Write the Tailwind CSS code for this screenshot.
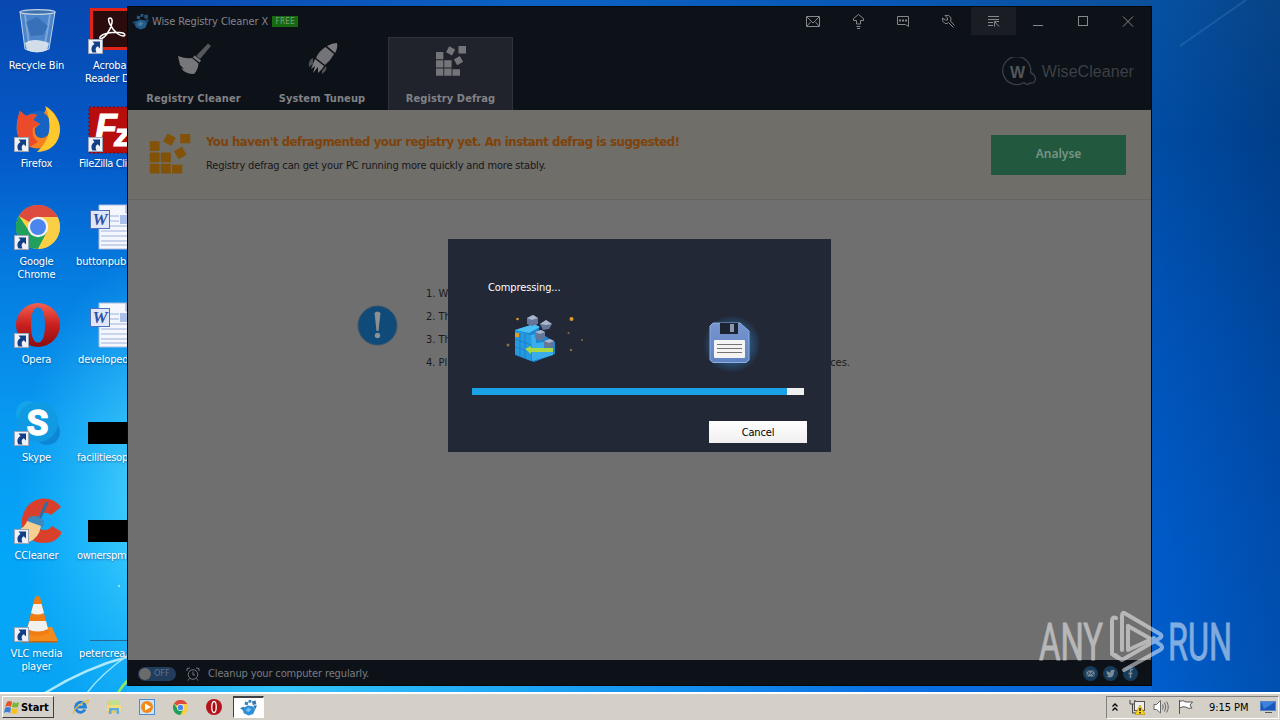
<!DOCTYPE html>
<html lang="en">
<head>
  <meta charset="UTF-8" />
  <meta name="viewport" content="width=device-width, initial-scale=1" />
  <title>Wise Registry Cleaner X</title>
  <script src="https://cdn.jsdelivr.net/npm/@tailwindcss/browser@4"></script>
  <style>
    body { font-family: 'DejaVu Sans Condensed', 'DejaVu Sans', sans-serif; font-size: 11px; line-height: 13px; }
    .label { text-shadow: 0 1px 2px rgba(0, 30, 80, .5); letter-spacing: -.15px; }
  </style>
</head>
<body class="w-[1280px] h-[720px] overflow-hidden">
  <!-- Shared shapes -->
  <svg width="0" height="0" class="absolute">
    <defs>
      <symbol id="shortcut" viewBox="0 0 15 15">
        <rect x=".5" y=".5" width="14" height="14" fill="#eef2f8" stroke="#9aa6b8" />
        <path d="M4.500 13.500C2.500 10 3.500 6.500 6.500 5L4.500 2.500H12V9.500L9.800 7.300C7.500 8.500 7 10.500 8.500 13.500Z" fill="#123f86" />
      </symbol>
      <symbol id="chrome" viewBox="0 0 44 44">
        <circle cx="22" cy="22" r="22" fill="#fbcf45" />
        <path d="M22 22L2.900 11A22 22 0 0 1 41.100 11L41 12H22Z" fill="#dd4b3e" />
        <path d="M2.900 11A22 22 0 0 0 22 44L31 27L22 22L13 26Z" fill="#1fa15d" />
        <path d="M22 12H41.500A22 22 0 0 1 22 44L31 27Z" fill="#fbcf45" />
        <circle cx="22" cy="22" r="10.200" fill="#f3f3f3" />
        <circle cx="22" cy="22" r="8" fill="#4a86ee" />
      </symbol>
      <symbol id="word" viewBox="0 0 48 48">
        <path d="M14 1H48V45H14Z" fill="#f4f7fd" stroke="#a9bbe0" />
        <path d="M25 12H34M25 17H34M16 22H48M16 27H48M16 32H48M16 37H48M16 41H48" stroke="#9db2dc" />
        <path d="M35 11H48V20H35Z" fill="#a8c0ea" />
        <path d="M41 1V9H48" fill="#dce5f6" stroke="#8b9cc0" />
        <rect x="5.500" y="6.500" width="19" height="18" fill="#dfe8fa" stroke="#4f70bd" />
        <text x="15" y="21" text-anchor="middle" font-family="Liberation Serif" font-style="italic" font-weight="bold" font-size="17" fill="#2b51a8">W</text>
      </symbol>
      <linearGradient id="operaRed" x1="0" y1="0" x2="0" y2="1">
        <stop offset="0" stop-color="#f4614f" /><stop offset=".5" stop-color="#c91f1f" /><stop offset="1" stop-color="#8d0d10" />
      </linearGradient>
      <symbol id="opera" viewBox="0 0 44 44">
        <path fill-rule="evenodd" d="M22 0A22 22 0 1 0 22 44A22 22 0 1 0 22 0ZM22 4.500C27 4.500 29 12 29 22S27 39.500 22 39.500S15 32 15 22S17 4.500 22 4.500Z" fill="url(#operaRed)" />
      </symbol>
      <symbol id="wise" viewBox="0 0 18 18">
        <path d="M4 9L9 7L14 8L16 11L14 16L9 17.500L4 15L3 12Z" fill="#2f8fd6" />
        <path d="M0 10L4 8L4 12Z M14 7L18 7L16 11Z" fill="#2273b5" />
        <rect x="5" y="3" width="3.500" height="3.500" fill="#3f86bd" transform="rotate(15 7 5)" />
        <rect x="9" y="1" width="3" height="3" fill="#3f86bd" />
        <rect x="13" y="2" width="4" height="4" fill="#3c79ac" transform="rotate(-12 15 4)" />
        <path d="M6 12L9 9L12 11L9 14Z" fill="#75c2f2" />
      </symbol>
      <symbol id="blocks" viewBox="0 0 40 40">
        <path d="M0 8H9.800V17.500H0ZM0 19H9.800V28.500H0ZM11 19H20.800V28.500H11ZM0 30H9.800V39.500H0ZM11 30H20.800V39.500H11ZM22 31H32V39.500H22Z" />
        <rect x="30" y="0" width="10" height="10" />
        <rect x="15" y="2" width="9" height="9" transform="rotate(28 19.500 6.500)" />
        <rect x="25.500" y="15" width="9" height="9" transform="rotate(-30 30 19.500)" />
      </symbol>
    </defs>
  </svg>

  <div class="relative flex h-full flex-col">
    <!-- Wallpaper -->
    <svg class="absolute inset-0" width="1280" height="692" viewBox="0 0 1280 692">
      <defs>
        <linearGradient id="sky" x1="0" y1="0" x2="0" y2="1">
          <stop offset="0" stop-color="#0848b0" /><stop offset=".22" stop-color="#045ac8" /><stop offset=".4" stop-color="#047ce0" />
          <stop offset=".6" stop-color="#0898f0" /><stop offset=".8" stop-color="#04a6f8" /><stop offset="1" stop-color="#08a4f4" />
        </linearGradient>
        <linearGradient id="top" x1="0" y1="0" x2="1" y2="0">
          <stop offset="0" stop-color="#0848b0" /><stop offset=".4" stop-color="#0c62c4" /><stop offset=".75" stop-color="#0757b4" /><stop offset="1" stop-color="#0b4f98" />
        </linearGradient>
        <linearGradient id="right" x1="0" y1="0" x2="0" y2="1">
          <stop offset="0" stop-color="#0a4a8c" /><stop offset=".2" stop-color="#00428f" /><stop offset=".5" stop-color="#004eae" />
          <stop offset=".75" stop-color="#0056c0" /><stop offset="1" stop-color="#005cc8" />
        </linearGradient>
        <linearGradient id="rightShade" x1="0" y1="0" x2="1" y2="0">
          <stop offset="0" stop-color="#0064d8" stop-opacity=".3" /><stop offset="1" stop-color="#003478" stop-opacity=".3" />
        </linearGradient>
        <radialGradient id="glow"><stop offset="0" stop-color="#5fe4ff" stop-opacity=".9" /><stop offset="1" stop-color="#35c4ff" stop-opacity="0" /></radialGradient>
        <linearGradient id="low" x1="0" y1="0" x2="1" y2="0">
          <stop offset="0" stop-color="#18aef4" /><stop offset=".15" stop-color="#33c4fb" /><stop offset=".4" stop-color="#1ca4f4" /><stop offset=".75" stop-color="#0a70e2" /><stop offset="1" stop-color="#0a64d4" />
        </linearGradient>
      </defs>
      <rect width="1152" height="692" fill="url(#sky)" />
      <rect x="127" width="1025" height="8" fill="url(#top)" />
      <ellipse cx="165" cy="500" rx="150" ry="250" fill="url(#glow)" />
      <rect x="1151" width="129" height="692" fill="url(#right)" />
      <rect x="1151" width="129" height="692" fill="url(#rightShade)" />
      <path d="M1180 46L1246 0" stroke="#4b86c4" stroke-width="2" opacity=".3" />
      <rect x="127" y="685" width="1025" height="7" fill="url(#low)" />
      <path d="M45 693Q85 668 130 656" stroke="#c9f5ff" stroke-width="2.500" fill="none" opacity=".85" />
      <path d="M87 693Q100 675 128 655" stroke="#c9f5ff" stroke-width="1.500" fill="none" opacity=".8" />
      <path d="M118 693Q122 686 128 680" stroke="#90e860" stroke-width="2.500" fill="none" />
      <circle cx="119" cy="586" r="1" fill="#b7f2ff" />
    </svg>

    <!-- Desktop icons -->
    <div class="relative grid h-[692px] content-start grid-cols-[73px_73px] auto-rows-[98px] pt-2 text-center text-white">
      <div class="flex flex-col items-center gap-[3px]">
        <svg width="48" height="48" viewBox="0 0 48 48">
          <path d="M7 4L12 41Q24 47 36 41L42 4Z" fill="#5f93cf" fill-opacity=".8" stroke="#b9d3ec" />
          <path d="M12 7L16 36M37 7L32 36" stroke="#d6e8f8" stroke-width="2" opacity=".35" />
          <path d="M13 14L24 9L35 18L30 27L18 28Z" fill="#2d64ab" opacity=".6" />
          <path d="M12 35Q20 29 36 35L34 42Q24 46 14 42Z" fill="#e9edf0" opacity=".85" />
          <ellipse cx="24.500" cy="4" rx="17.500" ry="2.300" fill="#3e71ae" stroke="#c3d3e4" stroke-width="1.300" />
        </svg>
        <p class="label">Recycle Bin</p>
      </div>
      <div class="flex flex-col items-start gap-[3px] pl-3">
        <svg width="48" height="48" viewBox="0 0 48 48">
          <rect x="5" y="0" width="46" height="42" fill="#e2231a" /><rect x="8" y="3" width="43" height="36" fill="#2a0c0c" />
          <path d="M25 10C29 10 27 19 22 26C18 31 14 32 15 29C18 25 30 23 38 25C42 27 39 30 33 26C26 21 21 10 25 10Z" fill="none" stroke="#fff" stroke-width="1.500" />
          <use href="#shortcut" x="3" y="31" width="15" height="15" />
        </svg>
        <p class="label w-[48px] text-left whitespace-nowrap"><span class="pl-2">Acroba</span><br />Reader D</p>
      </div>

      <div class="flex flex-col items-center gap-[3px]">
        <svg width="48" height="48" viewBox="0 0 48 48">
          <circle cx="26" cy="22" r="17" fill="#1763c4" />
          <path d="M7 5L13 10Q19 7 24 9L20 14L27 18L22 22C20 31 29 36 36 28C41 21 38 12 31 7L34 1C42 6 47 15 47 24A22 22 0 0 1 4 26C3 18 5 11 7 5Z" fill="#f58220" />
          <path d="M7 5L13 10Q19 7 24 9L20 14L27 18L20 22Q18 31 25 36L15 42Q3 34 4 23Q4 11 7 5Z" fill="#ec4a2b" />
          <path d="M32 0C43 7 47 16 47 24A22 22 0 0 1 24 46Q44 28 32 0Z" fill="#ffc92e" />
          <use href="#shortcut" x="1" y="31" width="15" height="15" />
        </svg>
        <p class="label">Firefox</p>
      </div>
      <div class="flex flex-col items-start gap-[3px] pl-3">
        <svg width="48" height="48" viewBox="0 0 48 48">
          <rect x="4" y="1" width="46" height="46" fill="#b80d0d" stroke="#7c0707" stroke-dasharray="2 2" />
          <text x="10" y="34" font-family="Liberation Sans" font-style="italic" font-weight="bold" font-size="36" letter-spacing="-3" fill="#fff" stroke="#fff">F<tspan dy="6" font-size="32">z</tspan></text>
          <use href="#shortcut" x="3" y="31" width="15" height="15" />
        </svg>
        <p class="label -ml-[6px] whitespace-nowrap"><span class="tracking-[-.4px]">FileZilla Cli</span></p>
      </div>

      <div class="flex flex-col items-center gap-[3px]">
        <svg width="48" height="48" viewBox="0 0 48 48">
          <use href="#chrome" x="3" y="1" width="44" height="44" />
          <use href="#shortcut" x="1" y="31" width="15" height="15" />
        </svg>
        <p class="label">Google<br />Chrome</p>
      </div>
      <div class="flex flex-col items-start gap-[3px] pl-3">
        <svg width="48" height="48"><use href="#word" /></svg>
        <p class="label -ml-[9px] whitespace-nowrap">buttonpub</p>
      </div>

      <div class="flex flex-col items-center gap-[3px]">
        <svg width="48" height="48" viewBox="0 0 48 48">
          <use href="#opera" x="3" y="0" width="44" height="46" />
          <use href="#shortcut" x="1" y="31" width="15" height="15" />
        </svg>
        <p class="label">Opera</p>
      </div>
      <div class="flex flex-col items-start gap-[3px] pl-3">
        <svg width="48" height="48"><use href="#word" /></svg>
        <p class="label -ml-[7px] whitespace-nowrap">developed</p>
      </div>

      <div class="flex flex-col items-center gap-[3px]">
        <svg width="48" height="48" viewBox="0 0 48 48">
          <circle cx="15" cy="13" r="12" fill="#14a4ea" /><circle cx="34" cy="32" r="13" fill="#0d86d6" /><circle cx="25" cy="22" r="20" fill="#109ae2" />
          <text x="24.500" y="35" text-anchor="middle" font-family="Roboto" font-weight="bold" font-size="35" fill="#fff" stroke="#fff" stroke-width="1.500">S</text>
          <use href="#shortcut" x="1" y="31" width="15" height="15" />
        </svg>
        <p class="label">Skype</p>
      </div>
      <div class="flex flex-col items-start gap-[3px] pl-3">
        <svg width="48" height="48"><rect x="3" y="22" width="45" height="22" /></svg>
        <p class="label -ml-2 whitespace-nowrap"><span class="tracking-[-.2px]">facilitiesop</span></p>
      </div>

      <div class="flex flex-col items-center gap-[3px]">
        <svg width="48" height="48" viewBox="0 0 48 48">
          <path d="M48 9C38 -4 18 -2 11 14C4 30 14 45 30 45C40 45 46 41 49 34L39 28C35 34 26 33 24 27C22 18 30 11 38 17Z" fill="#d8402c" />
          <path d="M34 4L26 22" stroke="#2b6fa5" stroke-width="3" />
          <path d="M16 19Q24 16 31 23L30 29L14 24Z" fill="#3d88bd" />
          <path d="M14 23L28 28Q26 40 16 44L3 33Q12 30 14 23Z" fill="#f6cf93" />
          <use href="#shortcut" x="1" y="31" width="15" height="15" />
        </svg>
        <p class="label">CCleaner</p>
      </div>
      <div class="flex flex-col items-start gap-[3px] pl-3">
        <svg width="48" height="48"><rect x="3" y="22" width="45" height="22" /></svg>
        <p class="label -ml-2 whitespace-nowrap"><span class="tracking-[-.3px]">ownerspm</span></p>
      </div>

      <div class="flex flex-col items-center gap-[3px]">
        <svg width="48" height="48" viewBox="0 0 48 48">
          <path d="M16 31H39L45 45H9Z" fill="#f58a1c" /><path d="M9 45H45V46.500H9Z" fill="#c9640b" />
          <path d="M22 1Q25 -1 27 1L36 37Q25 43 13 37Z" fill="#f07d12" />
          <path d="M20.500 8H28.500L31 17Q25 20 18 17ZM16.500 25H33L35 33Q25 38 14 33Z" fill="#f1f1ef" />
          <use href="#shortcut" x="1" y="31" width="15" height="15" />
        </svg>
        <p class="label">VLC media<br />player</p>
      </div>
      <div class="flex flex-col items-start gap-[3px] pl-3">
        <svg width="48" height="48"><path d="M5 44.500H48" stroke="#256b93" /></svg>
        <p class="label -ml-[6px] whitespace-nowrap">petercrea</p>
      </div>
    </div>

    <!-- Application window -->
    <div class="absolute left-[127px] top-[6px] flex h-[680px] w-[1025px] flex-col border border-[#05070a] bg-[#6f6f6f]">
      <header class="h-[103px] bg-[#0d1118]">
        <div class="flex h-[30px] items-start justify-between">
          <div class="flex h-[29px] items-center pl-1">
            <svg width="17" height="17" class="opacity-60"><use href="#wise" /></svg>
            <span class="ml-[3px] text-[11px] tracking-[-.1px] text-[#83868b]">Wise Registry Cleaner X</span>
            <span class="ml-[4px] flex h-[11px] w-[26px] items-center justify-center bg-[#156a10] text-[8px] tracking-[.3px] text-[#7f9d7a]">FREE</span>
          </div>
          <div class="flex h-7 text-[#85888c]">
            <div class="flex w-[45px] items-center justify-center">
              <svg width="15" height="15" viewBox="0 0 15 15" fill="none" stroke="currentColor"><path d="M.5 2.500H13.500V12.500H.5ZM1 3L7 9L13 3M1 12L4.500 8M13 12L9.500 8" /></svg>
            </div>
            <div class="flex w-[45px] items-center justify-center">
              <svg width="15" height="15" viewBox="0 0 15 15" fill="none" stroke="currentColor"><path d="M5.500 10V6.500H2.500V4.500L7.500 .5L12.500 4.500V6.500H9.500V10ZM5.500 12.500H9.500M6 14.500H9" /></svg>
            </div>
            <div class="flex w-[45px] items-center justify-center">
              <svg width="15" height="15" viewBox="0 0 15 15" fill="none" stroke="currentColor"><path d="M1.500 2.500H12.500V12.500L9.500 10.500H1.500Z" /><path d="M3 6.500H11" stroke-width="2" stroke-dasharray="2 1" /></svg>
            </div>
            <div class="flex w-[45px] items-center justify-center">
              <svg width="15" height="15" viewBox="0 0 15 15" fill="none" stroke="currentColor"><path d="M4 1.500L6.500 4V6H4.500L1.500 4Q1 8 4 9.500Q6 10 7.500 8.500L12.500 13.500M4 1.500Q8 .5 9.500 3Q10.500 5 9.500 7L13.500 11.500" /></svg>
            </div>
            <div class="flex w-[45px] items-center justify-center bg-[#1a1d24]">
              <svg width="15" height="15" viewBox="0 0 15 15" fill="none" stroke="currentColor"><path d="M2 2.500H13M2 5.500H13M2 8.500H7M2 11.500H7M8.500 12.500V7.500H13M9 8L13 12.500" /></svg>
            </div>
            <div class="flex w-[45px] items-center justify-center">
              <svg width="15" height="15" viewBox="0 0 15 15" stroke="currentColor"><path d="M2 11.500H12" /></svg>
            </div>
            <div class="flex w-[45px] items-center justify-center">
              <svg width="15" height="15" viewBox="0 0 15 15" fill="none" stroke="currentColor"><rect x="2.500" y="2.500" width="9" height="9" /></svg>
            </div>
            <div class="flex w-[45px] items-center justify-center">
              <svg width="15" height="15" viewBox="0 0 15 15" stroke="currentColor"><path d="M2 2.500L12 12.500M12 2.500L2 12.500" /></svg>
            </div>
          </div>
        </div>
        <div class="flex h-[73px] justify-between">
          <nav class="flex gap-[3.5px] pl-[3px] text-[11px] font-bold tracking-[.1px] text-[#808286]">
            <div class="flex w-[125px] flex-col items-center gap-[16px] pt-[5px]">
              <svg width="36" height="34" viewBox="0 0 36 34">
                <path d="M32 1.500L35 4L24 17L20 14Z" fill="#56575b" />
                <path d="M18.500 13.500L25 18.500L23.500 20.500L17 15.500Z" fill="#77787a" />
                <path d="M16 16L22.500 21.500Q22 28 18 32Q9 32 5 26L8 27L4 23L2 14Q10 17 16 16Z" fill="#777779" />
              </svg>
              <span>Registry Cleaner</span>
            </div>
            <div class="flex w-[125px] flex-col items-center gap-[16px] pt-[5px]">
              <svg width="36" height="34" viewBox="0 0 36 34">
                <path d="M23 4Q28 1 33 1Q34 6 31 11Z" fill="#7c7c80" />
                <path d="M21.500 5L30 12Q27 18 21 23L12 16Q15 9 21.500 5Z" fill="#737378" />
                <path d="M11 17L20 24L18 27L14 31L14 25L9 31L11 24L7 27Z" fill="#7d7d80" />
                <path d="M9 16Q4 18 5 25L9 22ZM22 24Q24 28 18 32L18 29Z" fill="#505156" />
              </svg>
              <span>System Tuneup</span>
            </div>
            <div class="flex w-[125px] flex-col items-center gap-[16px] border border-b-0 border-[#2f323b] bg-[#20232c] pt-1">
              <svg width="30" height="34" viewBox="0 0 30 34" fill="#747578"><use href="#blocks" x="0" y="4" width="30" height="30" /></svg>
              <span>Registry Defrag</span>
            </div>
          </nav>
          <div class="flex items-center gap-[5px] pr-[17px] pb-[4px]">
            <svg width="35" height="30" viewBox="0 0 35 30" fill="none" stroke="#3c3f45">
              <path d="M28.500 16A14 14 0 1 0 22 25.500Q25 29 28 26Q33 27 33.500 22Q33 17 28.500 16" stroke-width="1.300" />
              <text x="15.500" y="20.500" text-anchor="middle" font-family="Liberation Sans" font-weight="bold" font-size="16" fill="#53565b" stroke="none">W</text>
            </svg>
            <span class="font-['Liberation_Sans'] text-[16px] leading-5 tracking-[.05px] text-[#3c4046]">WiseCleaner</span>
          </div>
        </div>
      </header>

      <section class="flex h-[90px] items-center justify-between border-b border-[#646464] bg-[#706e69] pr-[25px] pl-[21px]">
        <div class="flex items-start">
          <svg width="42" height="41" viewBox="0 1 40 40" fill="#825208"><use href="#blocks" /></svg>
          <div class="ml-[15px] flex flex-col gap-[9px]">
            <h1 class="text-[13px] leading-[16px] font-bold tracking-[-.45px] text-[#7e420b]">You haven't defragmented your registry yet. An instant defrag is suggested!</h1>
            <p class="text-[11px] tracking-[-.165px] text-[#15171a]">Registry defrag can get your PC running more quickly and more stably.</p>
          </div>
        </div>
        <div class="flex h-10 w-[135px] items-center justify-center bg-[#22593e] pb-[3px] font-['Noto_Sans'] text-[12px] font-semibold text-[#779486]">Analyse</div>
      </section>

      <main class="relative flex grow items-start pt-[83px] pl-[229px] text-[#1b1b1b]">
        <svg width="41" height="41" viewBox="0 0 41 41" class="mt-[22px]">
          <circle cx="20.500" cy="20.500" r="19.500" fill="#104a78" stroke="#38566c" />
          <path d="M17.500 8Q20.500 5 23.500 8L21.500 26H19.500Z" fill="#8b8f92" /><circle cx="20.500" cy="30.500" r="2.700" fill="#8b8f92" />
        </svg>
        <div class="ml-[28px] flex w-[424px] flex-col gap-[10px] pt-[4px]">
          <p>1. W</p>
          <p>2. Th</p>
          <p>3. Th</p>
          <p class="flex justify-between"><span>4. Pl</span><span>ces.</span></p>
        </div>

        <!-- Progress dialog -->
        <div class="absolute top-[39px] left-[320px] flex h-[213px] w-[383px] flex-col bg-[#222836] px-6 pt-[42px]">
          <p class="pl-4 tracking-[-.1px] text-white">Compressing...</p>
          <div class="flex h-[94px] items-start justify-between pt-[20px] pr-[48px] pl-[30px]">
            <svg width="86" height="56" viewBox="0 0 86 56">
              <path d="M13 16L32 10L37 13V18L53 28V40L32 48L13 41Z" fill="#1b86cf" />
              <path d="M13 16L32 10L38 13L27 19Z" fill="#4bc0f2" />
              <path d="M13 16L29 21V47L13 40Z" fill="#259ae0" />
              <path d="M18 19V42M23 20V44M13 25L29 31M13 33L29 38" stroke="#1473b9" opacity=".6" />
              <path d="M29 21L34 20V29L42 28V34H51V41L30 47Z" fill="#3aaeea" />
              <g fill="#66769b">
                <path d="M25 4L31 1L36 4V10L30 12L25 10Z" /><path d="M38 10L44 6L50 10L47 15L41 16Z" />
                <path d="M33 18L39 16L43 18V24L38 27L33 24Z" /><path d="M42 27L48 25L52 27V32L47 35L42 32Z" />
              </g>
              <path d="M25 4L31 1L36 4L30 6ZM38 10L44 6L50 10L44 11ZM33 18L39 16L43 18L38 20ZM42 27L48 25L52 27L47 29Z" fill="#a9b5cd" />
              <path d="M23 35L29 32V34H51V38H29V40Z" fill="#a8d845" />
              <g fill="#e09a26"><rect x="13" y="19" width="4" height="4" /><circle cx="15.500" cy="5" r="1.300" /><circle cx="69.500" cy="5" r="2" /></g>
              <g fill="#8a6d45"><circle cx="6" cy="31" r="1.500" /><circle cx="66.500" cy="19" r="1" /><circle cx="80" cy="26" r="1" /><circle cx="69" cy="36" r="1.200" /></g>
            </svg>
            <svg width="60" height="60" viewBox="0 0 60 60" class="mt-px">
              <defs>
                <radialGradient id="diskGlow"><stop offset=".5" stop-color="#2f7fc0" stop-opacity=".6" /><stop offset="1" stop-color="#2f7fc0" stop-opacity="0" /></radialGradient>
                <linearGradient id="disk" x1="0" y1="0" x2="0" y2="1"><stop offset="0" stop-color="#7795cf" /><stop offset="1" stop-color="#5f83c2" /></linearGradient>
              </defs>
              <circle cx="33" cy="29" r="29" fill="url(#diskGlow)" />
              <path d="M14 8H41L50 16V45L47 47.500H14L11 45V11Z" fill="url(#disk)" stroke="#8fade0" />
              <rect x="21" y="8" width="18" height="11" fill="#1d2431" /><rect x="31" y="9" width="4" height="8" fill="#8997b4" />
              <rect x="15" y="25" width="31" height="18" rx="1" fill="#f4f4f4" />
              <path d="M18 29.500H43M18 33.500H43M18 37.500H43" stroke="#747474" />
            </svg>
          </div>
          <div class="h-[7px] w-[332px] bg-[#efefef]"><div class="h-full bg-[#1aa1e6]" style="width: 94.9%"></div></div>
          <div class="mt-[26px] flex h-[22px] w-[98px] items-center justify-center self-end bg-linear-to-b from-white to-[#f1eff0] tracking-[-.15px] text-black">Cancel</div>
        </div>
      </main>

      <footer class="flex h-[25px] items-center justify-between bg-[#0d1118] pr-[13px] pl-[10px]">
        <div class="flex items-center pt-[2px]">
          <div class="flex h-[14px] w-[38px] items-center gap-[3px] rounded-full bg-[#213c5c] pl-px text-[9px] text-[#61738a]">
            <span class="size-3 rounded-full bg-[#6c6b6b]"></span>OFF
          </div>
          <svg width="14" height="14" viewBox="0 0 14 14" fill="none" stroke="#74777b" class="ml-[10px]">
            <circle cx="7" cy="7.500" r="4.800" /><path d="M7 4.500V8H9M1 4V1.500L4 1M13 4V1.500L10 1M3.500 11.500L2 13.500M10.500 11.500L12 13.500" />
          </svg>
          <span class="ml-2 text-[11px] tracking-[-.14px] text-[#7b7d81]">Cleanup your computer regularly.</span>
        </div>
        <div class="flex gap-[5px] pt-px">
          <svg width="15" height="15" viewBox="0 0 15 15"><circle cx="7.500" cy="7.500" r="7.500" fill="#173c5b" /><path d="M3.500 4.500H11.500V10.500H3.500Z" fill="#7d8b96" /><path d="M3.500 4.500L7.500 8L11.500 4.500M3.500 10.500L6 7.500M11.500 10.500L9 7.500" stroke="#173c5b" fill="none" /></svg>
          <svg width="15" height="15" viewBox="0 0 15 15"><circle cx="7.500" cy="7.500" r="7.500" fill="#173c5b" /><path d="M3.500 4.500Q5.500 6.500 7.500 6.500Q7 4 9.500 3.800L12 4.500L11 6Q11 11.500 6 11.500L3.500 10.500L5.500 10L3.800 8Z" fill="#7d8b96" /></svg>
          <svg width="15" height="15" viewBox="0 0 15 15"><circle cx="7.500" cy="7.500" r="7.500" fill="#173c5b" /><path d="M10 3.500H8.500Q7.500 3.500 7.500 5V12M5.500 7.500H9.500" stroke="#7d8b96" stroke-width="1.500" fill="none" /></svg>
        </div>
      </footer>
    </div>

    <!-- Watermark -->
    <svg class="absolute top-[605px] left-[1034px] opacity-50" width="230" height="72" viewBox="0 0 230 72">
      <g fill="#fff" stroke="#fff" stroke-width=".8" font-family="Roboto" font-size="52">
        <text x="5" y="55" textLength="64" lengthAdjust="spacingAndGlyphs">ANY</text>
        <text x="134" y="55" textLength="64" lengthAdjust="spacingAndGlyphs">RUN</text>
      </g>
      <g fill="none" stroke="#fff" stroke-width="4" stroke-linecap="round" stroke-linejoin="round">
        <path d="M82 13Q78 11 78 16V49L84 53" />
        <path d="M88 45V11Q88 6 92 9L126 29Q129 31 126 33L88 55L81 50" />
        <path d="M94 21L124 38Q131 42 126 45L90 65" />
        <path d="M94 21V45L120 33" />
      </g>
    </svg>

    <!-- Taskbar -->
    <div class="relative flex h-7 items-center justify-between border-t-2 border-white bg-[#d4d0c8] text-black">
      <div class="flex items-center">
        <div class="ml-[2px] flex h-[22px] w-[52px] items-center gap-px border border-t-white border-r-[#404040] border-b-[#404040] border-l-white pl-px text-[11px] font-bold">
          <svg width="16" height="16" viewBox="0 0 16 16">
            <path d="M3 3Q6 1 8 3L7 8Q4 6 1 8Z" fill="#e6512a" /><path d="M9 3Q12 5 15 3L14 8Q11 9 8 8Z" fill="#78b833" />
            <path d="M1 9Q4 7 7 9L6 14Q3 12 0 14Z" fill="#3a7fd4" /><path d="M8 9Q11 11 14 9L13 14Q10 16 7 14Z" fill="#f4c320" />
          </svg>
          <span class="tracking-[-.1px]">Start</span>
        </div>
        <div class="ml-[18px] flex items-center gap-[17px]">
          <svg width="17" height="16" viewBox="0 0 17 16" fill="none"><path d="M13 10.500A5 5 0 1 1 13.500 8H5" stroke="#2581d6" stroke-width="2.800" /><path d="M2 15Q0 13 5 8T16 1Q17 3 14 5" stroke="#e6b93c" stroke-width="1.200" /></svg>
          <svg width="16" height="16" viewBox="0 0 16 16"><path d="M1 2H6L7 4H14V14H1Z" fill="#e8cc60" /><path d="M3 1H13V6H3Z" fill="#bfe08f" /><path d="M1 6H15V12H1Z" fill="#f3dc80" /><path d="M3 15V9H13V15H10.500V11.500H5.500V15Z" fill="#5faade" /></svg>
          <svg width="16" height="16" viewBox="0 0 16 16"><rect x=".5" y=".5" width="15" height="15" fill="#cfe3f5" stroke="#4b8ed0" /><circle cx="8" cy="8" r="6" fill="#f18a17" /><path d="M6 4.500L12 8L6 11.500Z" fill="#fff" /></svg>
          <svg width="15" height="15" class="ml-px"><use href="#chrome" /></svg>
          <svg width="16" height="16" viewBox="0 0 16 16" class="ml-px"><circle cx="8" cy="8" r="8" fill="#b3151a" /><ellipse cx="8" cy="8" rx="2.200" ry="5.500" fill="#a00c10" stroke="#fff" stroke-width="1.300" /></svg>
        </div>
        <div class="ml-[11px] flex h-[22px] w-[31px] items-center justify-center border border-t-2 border-t-[#404040] border-r-white border-b-white border-l-[#404040] bg-white">
          <svg width="17" height="17"><use href="#wise" /></svg>
        </div>
      </div>
      <div class="mr-px flex h-[23px] w-[173px] items-center border border-t-[#808080] border-r-white border-b-white border-l-[#808080] pl-[4px]">
        <svg width="8" height="10" viewBox="0 0 8 10" fill="none" stroke="#000" stroke-width="1.300"><path d="M1.500 4.500L4 2L6.500 4.500M1.500 8.500L4 6L6.500 8.500" /></svg>
        <svg width="16" height="16" viewBox="0 0 16 16" class="ml-[10px]"><path d="M1 1V5H6V1M3.500 5V14H7" fill="none" stroke="#444" /><rect x="5.500" y="2.500" width="10" height="9" fill="#eee" stroke="#555" /><path d="M11 6L16 15.500H6Z" fill="#f8d51e" stroke="#b58c00" stroke-width=".6" /><path d="M11 9V12M11 13V14.500" stroke="#000" stroke-width="1.300" /></svg>
        <svg width="16" height="16" viewBox="0 0 16 16" class="ml-2" fill="none" stroke="#666"><path d="M1 5.500H3.500L7.500 1.500V14L3.500 10.500H1Z" fill="#fff" /><path d="M9.500 5.500Q11 8 9.500 10.500M11.500 3.500Q14 8 11.500 12.500M13.500 2.500Q17 8 13.500 13.500" /></svg>
        <svg width="17" height="16" viewBox="0 0 17 16" class="ml-2" fill="#fff" stroke="#555"><path d="M2.500 1V15M2.500 2.500Q6 .5 9 3H15.500L13 6L15 9Q11 10 8.500 8Q6 7 2.500 9" /></svg>
        <span class="ml-[15px] tracking-[-.05px]">9:15 PM</span>
        <svg width="16" height="14" viewBox="0 0 16 14" class="ml-[11px]"><rect x=".5" y="1.500" width="15" height="9" fill="#1a57b8" stroke="#5585c8" /><path d="M1 2H15L4 9Z" fill="#3a82dc" /><path d="M5 12.500H12" stroke="#555" /></svg>
      </div>
    </div>
  </div>
</body>
</html>
